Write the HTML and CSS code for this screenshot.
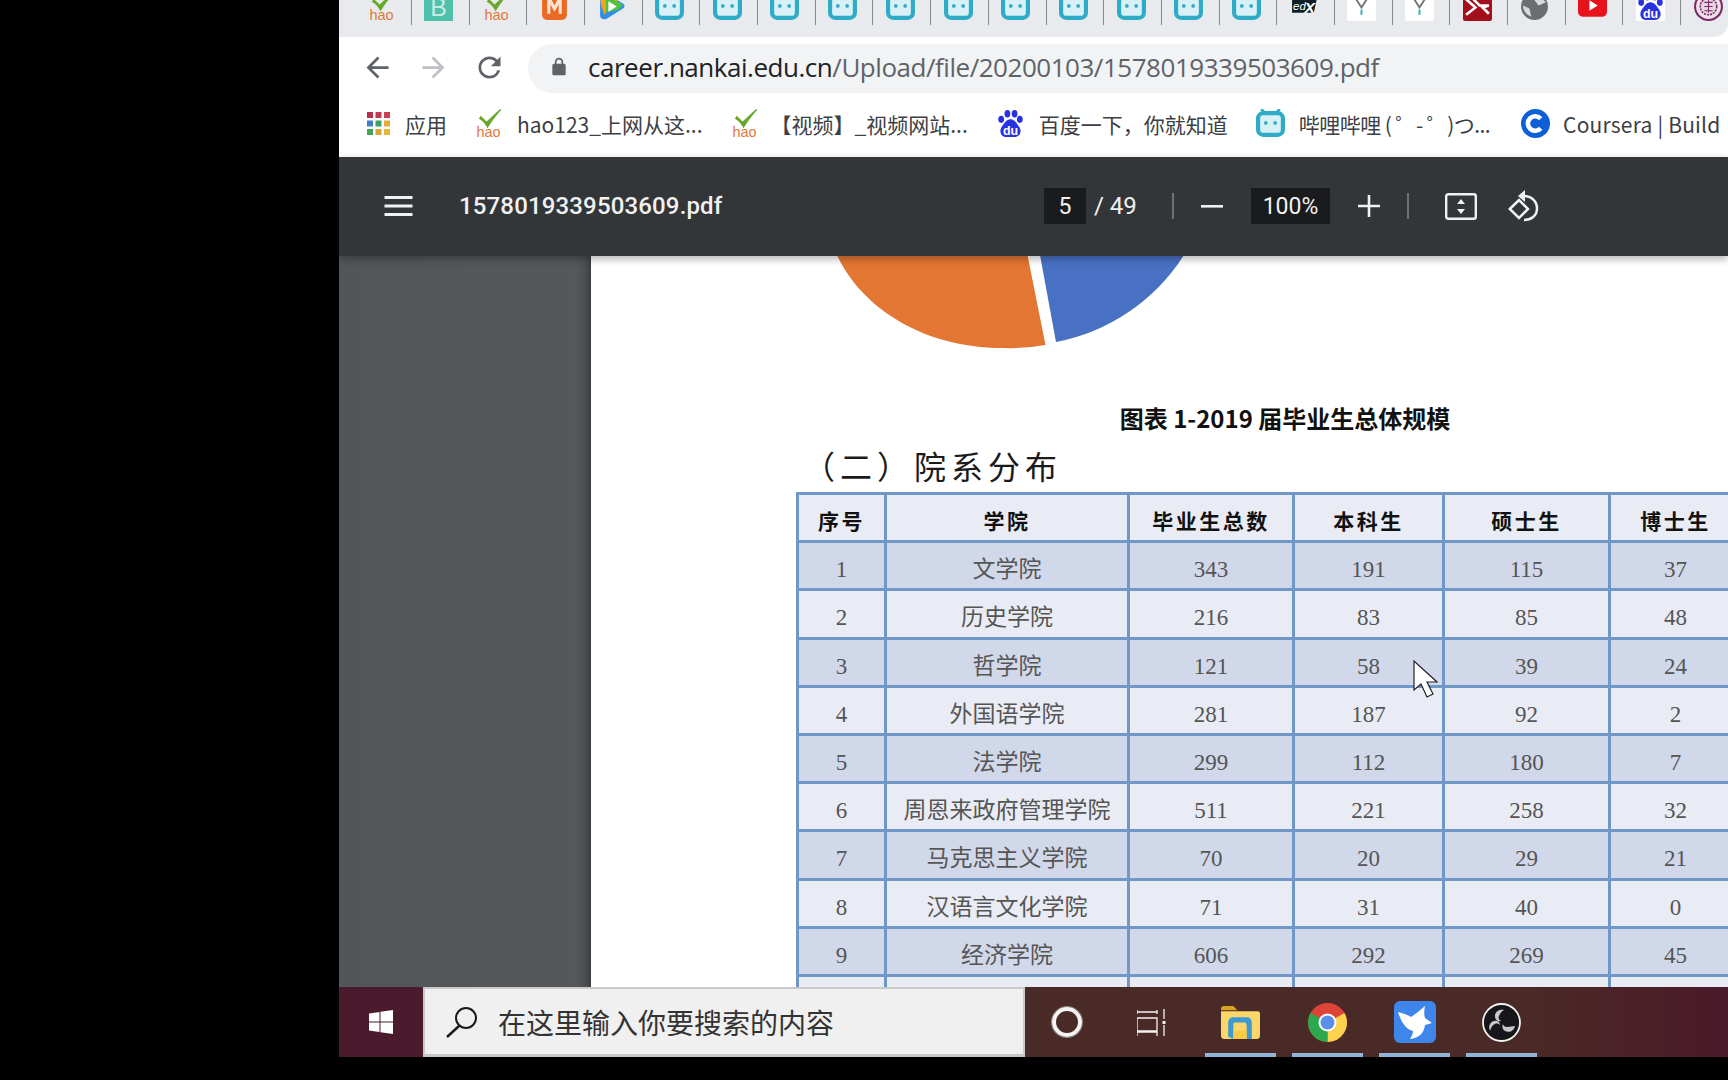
FILE: index.html
```html
<!DOCTYPE html>
<html lang="zh-CN">
<head>
<meta charset="utf-8">
<title>1578019339503609.pdf</title>
<link rel="stylesheet" href="styles.css">
</head>
<body>
<svg class="defs" aria-hidden="true">
  <symbol id="hao" viewBox="0 0 30 30">
    <path d="M7 7l6 6L27 0c1 0 1 1 1 1-5 6-10 12-14 19C12 16 9 12 5 10z" fill="#69a82a"/>
  </symbol>
  <symbol id="mgtv" viewBox="0 0 28 28">
    <path d="M2 0l7 0 5 4 5-4 7 0v22c0 3-2 5-5 5H7c-3 0-5-2-5-5z" fill="#ea6a23"/>
    <path d="M7 5h3v16H7zM10 5l4 8 4-8h3v16h-3V12l-4 7-4-7z" fill="#fbe3d2"/>
  </symbol>
  <symbol id="tv" viewBox="0 0 28 28">
    <path d="M3 4c0-3 3-4 5-3l17 10c2 1 2 4 0 5L9 26c-3 1-6 0-6-3z" fill="#2f8fe8"/>
    <path d="M3 4c0-3 3-4 5-3l12 7L7 22c-2-6-4-12-4-18z" fill="#f2a51c"/>
    <path d="M7 3l18 9-4 5L8 20c1-5 1-12-1-17z" fill="#52c23a"/>
    <path d="M11 9l8 5-8 5z" fill="#fff"/>
  </symbol>
  <symbol id="bili" viewBox="0 0 28 28">
    <rect x="2" y="4" width="24" height="21" rx="5" fill="#d9f0f6" stroke="#2eabc6" stroke-width="4"/>
    <circle cx="9.500" cy="13.500" r="1.800" fill="#2eabc6"/>
    <circle cx="18.500" cy="13.500" r="1.800" fill="#2eabc6"/>
    <path d="M8 3L5 0M20 3l3-3" stroke="#2eabc6" stroke-width="2.500"/>
  </symbol>
  <symbol id="lanyard" viewBox="0 0 28 28">
    <rect width="28" height="28" rx="2" fill="#fff"/>
    <path d="M7 4l7 11 7-11" fill="none" stroke="#707478" stroke-width="1.800"/>
    <path d="M14 17v5" stroke="#3eb3c0" stroke-width="2"/>
  </symbol>
  <symbol id="xr" viewBox="0 0 28 28">
    <rect width="28" height="28" rx="2" fill="#a30f1a"/>
    <path d="M3 7l9 8-9 7M25 6H13l-2 2 5 5h9l-6 2 6 6" fill="none" stroke="#fff" stroke-width="2.500"/>
  </symbol>
  <symbol id="globe" viewBox="0 0 28 28">
    <circle cx="14" cy="14" r="13" fill="#6b6d70"/>
    <path d="M14 8l6-3 5 5-7 3zM3 13l6 3 2 8c-5-2-8-6-8-11z" fill="#d9dadb"/>
  </symbol>
  <symbol id="yt" viewBox="0 0 28 28">
    <rect y="2" width="28" height="22" rx="5" fill="#e8121c"/>
    <path d="M11 8l8 5-8 5z" fill="#fff"/>
  </symbol>
  <symbol id="paw" viewBox="0 0 28 28">
    <rect width="28" height="28" rx="2" fill="#fff"/>
    <ellipse cx="5" cy="10" rx="2.800" ry="3.400" fill="#2932e1"/>
    <ellipse cx="11" cy="4.500" rx="2.800" ry="3.600" fill="#2932e1"/>
    <ellipse cx="18" cy="4.500" rx="2.800" ry="3.600" fill="#2932e1"/>
    <ellipse cx="23" cy="10" rx="2.800" ry="3.400" fill="#2932e1"/>
    <path d="M14 10c4 0 6 4 9 8 2 4 0 9-5 9H10c-5 0-7-5-5-9 3-4 5-8 9-8z" fill="#2932e1"/>
  </symbol>
  <symbol id="seal" viewBox="0 0 28 28">
    <circle cx="14" cy="14" r="13" fill="#efe3ea" stroke="#7c2a63" stroke-width="2"/>
    <circle cx="14" cy="14" r="8" fill="#e8d5e2" stroke="#7c2a63" stroke-width="1.500" stroke-dasharray="2 1"/>
    <path d="M10 10h8M10 14h8M10 18h8M14 8v12" stroke="#7c2a63"/>
  </symbol>
  <symbol id="coursera" viewBox="0 0 28 28">
    <circle cx="14" cy="14" r="14" fill="#0f5fd7"/>
    <path d="M19 9.500A7 7 0 1 0 19 18.500" fill="none" stroke="#fff" stroke-width="4.500"/>
  </symbol>
  <symbol id="apps" viewBox="0 0 23 23">
    <path d="M0 0h6v6H0z" fill="#b3344a"/><path d="M8.500 0h6v6h-6z" fill="#c4394e"/><path d="M17 0h6v6h-6z" fill="#c9405a"/>
    <path d="M0 8.500h6v6H0z" fill="#3d7fc4"/><path d="M8.500 8.500h6v6h-6z" fill="#3fa06a"/><path d="M17 8.500h6v6h-6z" fill="#e8a93a"/>
    <path d="M0 17h6v6H0z" fill="#47a35a"/><path d="M8.500 17h6v6h-6z" fill="#d9a53a"/><path d="M17 17h6v6h-6z" fill="#e2b53f"/>
  </symbol>
</svg>

<div class="screen">
  <div class="blackout"></div>
  <main class="main">
    <div class="tabs">
      <div class="tab"><svg class="fav" viewBox="0 0 30 30"><use href="#hao"/><text class="logo-hao" x="15" y="29">hao</text></svg></div>
      <div class="tab"><svg class="fav" viewBox="0 0 28 28"><rect width="28" height="28" fill="#4fc0ac"/><text class="logo-b" x="14" y="23">B</text></svg></div>
      <div class="tab"><svg class="fav" viewBox="0 0 30 30"><use href="#hao"/><text class="logo-hao" x="15" y="29">hao</text></svg></div>
      <div class="tab"><svg class="fav"><use href="#mgtv"/></svg></div>
      <div class="tab"><svg class="fav"><use href="#tv"/></svg></div>
      <div class="tab"><svg class="fav"><use href="#bili"/></svg></div>
      <div class="tab"><svg class="fav"><use href="#bili"/></svg></div>
      <div class="tab"><svg class="fav"><use href="#bili"/></svg></div>
      <div class="tab"><svg class="fav"><use href="#bili"/></svg></div>
      <div class="tab"><svg class="fav"><use href="#bili"/></svg></div>
      <div class="tab"><svg class="fav"><use href="#bili"/></svg></div>
      <div class="tab"><svg class="fav"><use href="#bili"/></svg></div>
      <div class="tab"><svg class="fav"><use href="#bili"/></svg></div>
      <div class="tab"><svg class="fav"><use href="#bili"/></svg></div>
      <div class="tab"><svg class="fav"><use href="#bili"/></svg></div>
      <div class="tab"><svg class="fav"><use href="#bili"/></svg></div>
      <div class="tab"><svg class="fav" viewBox="0 0 28 28"><path d="M2 6h24l-3 14H2z" fill="#0f1f26"/><text class="logo-ed" x="3" y="17">ed</text><text class="logo-x" x="14" y="20">X</text></svg></div>
      <div class="tab"><svg class="fav"><use href="#lanyard"/></svg></div>
      <div class="tab"><svg class="fav"><use href="#lanyard"/></svg></div>
      <div class="tab"><svg class="fav"><use href="#xr"/></svg></div>
      <div class="tab"><svg class="fav"><use href="#globe"/></svg></div>
      <div class="tab"><svg class="fav"><use href="#yt"/></svg></div>
      <div class="tab"><svg class="fav" viewBox="0 0 28 28"><use href="#paw"/><text class="logo-du" x="14" y="25">du</text></svg></div>
      <div class="tab tab-last"><svg class="fav"><use href="#seal"/></svg></div>
    </div>

    <div class="toolbar">
      <svg class="nav" viewBox="0 0 24 24"><path d="M20 11H7.830l5.590-5.590L12 4l-8 8 8 8 1.410-1.410L7.830 13H20v-2z"/></svg>
      <svg class="nav nav-off" viewBox="0 0 24 24"><path d="M12 4l-1.410 1.410L16.170 11H4v2h12.170l-5.580 5.590L12 20l8-8z"/></svg>
      <svg class="nav" viewBox="0 0 24 24"><path d="M17.650 6.350A7.958 7.958 0 0 0 12 4c-4.420 0-7.990 3.580-7.990 8s3.570 8 7.990 8c3.730 0 6.840-2.550 7.730-6h-2.080A5.990 5.990 0 0 1 12 18c-3.310 0-6-2.690-6-6s2.690-6 6-6c1.660 0 3.140.69 4.220 1.780L13 11h7V4l-2.350 2.350z"/></svg>
      <div class="omnibox">
        <svg class="lock" viewBox="0 0 24 24"><path d="M18 8h-1V6c0-2.760-2.240-5-5-5S7 3.240 7 6v2H6c-1.100 0-2 .9-2 2v10c0 1.100.9 2 2 2h12c1.100 0 2-.9 2-2V10c0-1.100-.9-2-2-2zM9 6c0-1.660 1.340-3 3-3s3 1.340 3 3v2H9V6z"/></svg>
        <span class="url"><span class="host">career.nankai.edu.cn</span>/Upload/file/20200103/1578019339503609.pdf</span>
      </div>
    </div>

    <div class="bookmarks">
      <div class="bm bm-apps"><svg class="bm-grid"><use href="#apps"/></svg><span>应用</span></div>
      <div class="bm bm-hao"><svg class="bm-ico" viewBox="0 0 30 30"><use href="#hao"/><text class="logo-hao" x="15" y="29">hao</text></svg><span>hao123_上网从这...</span></div>
      <div class="bm bm-video"><svg class="bm-ico" viewBox="0 0 30 30"><use href="#hao"/><text class="logo-hao" x="15" y="29">hao</text></svg><span>【视频】_视频网站...</span></div>
      <div class="bm bm-du"><svg class="bm-ico" viewBox="0 0 28 28"><use href="#paw"/><text class="logo-du" x="14" y="25">du</text></svg><span>百度一下，你就知道</span></div>
      <div class="bm bm-bili"><svg class="bm-ico"><use href="#bili"/></svg><span>哔哩哔哩 ( ゜- ゜)つ...</span></div>
      <div class="bm bm-coursera"><svg class="bm-ico"><use href="#coursera"/></svg><span>Coursera | Build</span></div>
    </div>

    <div class="pdfbar">
      <svg class="menu" viewBox="0 0 28 20"><path d="M0 0h28v3H0zM0 8.500h28v3H0zM0 17h28v3H0z"/></svg>
      <div class="filename">1578019339503609.pdf</div>
      <div class="pdfbox pdfbox-page">5</div>
      <div class="pagecount">/ 49</div>
      <div class="pdfsep"></div>
      <svg class="pdfbtn pdfbtn-minus" viewBox="0 0 22 22"><path d="M0 10h22v2.600H0z"/></svg>
      <div class="pdfbox pdfbox-zoom">100%</div>
      <svg class="pdfbtn pdfbtn-plus" viewBox="0 0 22 22"><path d="M9.700 0h2.600v9.700H22v2.600h-9.700V22H9.700v-9.700H0V9.700h9.700z"/></svg>
      <div class="pdfsep pdfsep-2"></div>
      <svg class="fit" viewBox="0 0 32 27"><rect x="1.200" y="1.200" width="29.600" height="24.600" rx="2" fill="none" stroke="#f1f1f1" stroke-width="2.400"/><path d="M16 6l4 5h-8zM16 21l-4-5h8z" fill="#f1f1f1"/></svg>
      <svg class="rotate" viewBox="0 0 32 32"><path d="M1.800 19L11 10l9 9-9 9z" fill="none" stroke="#f1f1f1" stroke-width="2.500"/><path d="M16 6c7 0 13 5 13 12.500S23 30 16 30" fill="none" stroke="#f1f1f1" stroke-width="2.500"/><path d="M17 0v12l-7-6z" fill="#f1f1f1"/></svg>
    </div>

    <div class="viewer">
      <div class="side"></div>
      <div class="page">
        <svg class="pie" viewBox="591 255 1137 100">
          <path d="M700 255H1027.500L1045.500 345A195 195 0 0 1 1003 348C920 348 860 305 837 255z" fill="#e27632"/>
          <path d="M1040 255H1184A195 195 0 0 1 1056 342z" fill="#4871c4"/>
        </svg>
        <div class="caption">图表 1-2019 届毕业生总体规模</div>
        <h2 class="section">（二）院系分布</h2>
        <table class="stats">
          <colgroup><col class="c1"><col class="c2"><col class="c3"><col class="c4"><col class="c5"><col class="c6"></colgroup>
          <thead><tr><th>序号</th><th>学院</th><th>毕业生总数</th><th>本科生</th><th>硕士生</th><th>博士生</th></tr></thead>
          <tbody>
            <tr><td>1</td><td>文学院</td><td>343</td><td>191</td><td>115</td><td>37</td></tr>
            <tr><td>2</td><td>历史学院</td><td>216</td><td>83</td><td>85</td><td>48</td></tr>
            <tr><td>3</td><td>哲学院</td><td>121</td><td>58</td><td>39</td><td>24</td></tr>
            <tr><td>4</td><td>外国语学院</td><td>281</td><td>187</td><td>92</td><td>2</td></tr>
            <tr><td>5</td><td>法学院</td><td>299</td><td>112</td><td>180</td><td>7</td></tr>
            <tr><td>6</td><td>周恩来政府管理学院</td><td>511</td><td>221</td><td>258</td><td>32</td></tr>
            <tr><td>7</td><td>马克思主义学院</td><td>70</td><td>20</td><td>29</td><td>21</td></tr>
            <tr><td>8</td><td>汉语言文化学院</td><td>71</td><td>31</td><td>40</td><td>0</td></tr>
            <tr><td>9</td><td>经济学院</td><td>606</td><td>292</td><td>269</td><td>45</td></tr>
            <tr><td></td><td></td><td></td><td></td><td></td><td></td></tr>
          </tbody>
        </table>
        <svg class="cursor" viewBox="0 0 25 38"><path d="M1 1v29l7-6 6 13 6-3-6-12h10z" fill="#fff" stroke="#222" stroke-width="1.200"/></svg>
      </div>
    </div>

    <div class="taskbar">
      <div class="start"><svg class="winlogo" viewBox="0 0 24 24"><path d="M0 3.400L10.500 2v9.500H0zM11.500 1.800L24 0v11.500H11.500zM0 12.500h10.500V22L0 20.600zM11.500 12.500H24V24l-12.500-1.800z" fill="#fff"/></svg></div>
      <div class="search">
        <svg class="mag" viewBox="0 0 32 32"><circle cx="20" cy="12" r="10" fill="none" stroke="#1a1a1a" stroke-width="2"/><path d="M13 20L1 31" stroke="#1a1a1a" stroke-width="2.400"/></svg>
        <span class="search-text">在这里输入你要搜索的内容</span>
      </div>
      <div class="ring"></div>
      <svg class="taskview" viewBox="0 0 29 27"><path d="M0 5V1M20 1v4M0 3h20M0 9h20v13H0zM0 27v-4h20v4M27 0v10M27 16v11" fill="none" stroke="#f4f4f4" stroke-width="1.300"/><path d="M25.500 12h3v3h-3z" fill="#f4f4f4"/></svg>
      <div class="apps">
        <div class="app">
          <svg class="app-ico" viewBox="0 0 38 32"><path d="M0 3c0-2 1-3 3-3h9l4 4H0z" fill="#d9a520"/><path d="M0 5h36c1 0 2 1 2 2v22c0 2-1 3-3 3H3c-2 0-3-1-3-3z" fill="#fbd669"/><path d="M7 30V16c0-3 2-5 5-5h13c3 0 5 2 5 5v16h-5V19c0-2-1-3-2-3h-9c-2 0-2 1-2 3v13z" fill="#3d9ad1"/><path d="M12 24h13v8H12z" fill="#f7c948"/></svg>
        </div>
        <div class="app">
          <svg class="app-ico" viewBox="0 0 39 39"><circle cx="19.500" cy="19.500" r="19.500" fill="#db4437"/><path d="M19.500 19.500L36.500 10A19.500 19.500 0 0 1 19.500 39z" fill="#fbd34d"/><path d="M19.500 19.500L19.500 39A19.500 19.500 0 0 1 2.500 10z" fill="#2ea84f"/><circle cx="19.500" cy="19.500" r="9" fill="#fff"/><circle cx="19.500" cy="19.500" r="7" fill="#5a8fe8"/></svg>
        </div>
        <div class="app">
          <svg class="app-ico app-bird" viewBox="0 0 42 42"><rect width="42" height="42" rx="6" fill="#3f86ec"/><path d="M4 11c5 1 10 3 13 5 5-3 9-7 14-11-1 5-1 9 0 12l7 5-7 2c-1 8-6 13-15 14 2-3 3-6 3-8C11 28 7 20 4 11z" fill="#fff"/></svg>
        </div>
        <div class="app">
          <svg class="app-ico" viewBox="0 0 39 39"><circle cx="19.500" cy="19.500" r="18.500" fill="#17171b" stroke="#f2f2f2" stroke-width="1.800"/><path d="M22 7c-5-1-9 2-9 6 0 4 3 6 6 5-2-1-3-3-2-5 1-3 3-5 5-6zM8 28c-2-5 0-9 4-10 3-1 6 1 6 4-1-1-3-2-5-1-3 1-4 4-5 7zM33 23c-1 5-6 7-10 5-3-2-3-5-2-7 0 2 2 3 4 3 3 0 6-1 8-1z" fill="#c9c9cc"/></svg>
        </div>
      </div>
    </div>
  </main>
</div>
</body>
</html>
```

FILE: styles.css
```css
* { box-sizing: border-box; }
html, body { margin: 0; padding: 0; background: #000; }
body { width: 1728px; height: 1080px; overflow: hidden; font-family: "Noto Sans CJK SC", sans-serif; }
.defs { position: absolute; width: 0; height: 0; }

.screen { display: flex; width: 1728px; height: 1057px; }
.blackout { width: 339px; flex: none; background: #000; }
.main { width: 1389px; height: 1057px; display: flex; flex-direction: column; overflow: hidden; background: #fff; }

/* Logo lettering inside favicons */
.logo-hao { font-family: "Liberation Sans", sans-serif; font-size: 15px; text-anchor: middle; fill: #e0793a; }
.logo-b { font-family: "Liberation Sans", sans-serif; font-size: 24px; text-anchor: middle; fill: #c8ece4; }
.logo-ed { font-family: "Liberation Sans", sans-serif; font-style: italic; font-size: 11px; fill: #fff; }
.logo-x { font-family: "Liberation Sans", sans-serif; font-style: italic; font-weight: 700; font-size: 15px; fill: #fff; }
.logo-du { font-family: "Liberation Sans", sans-serif; font-weight: 700; font-size: 12px; text-anchor: middle; fill: #fff; }

/* Tab strip */
.tabs { height: 37px; flex: none; display: flex; align-items: flex-start; padding-left: 15.3px; background: #e8eaed; border-bottom-right-radius: 14px; overflow: hidden; }
.tab { width: 57.7px; height: 24.5px; flex: none; display: flex; justify-content: center; padding-right: 3px; border-right: 1.5px solid #85888c; }
.tab-last { border-right: 0; }
.fav { width: 29px; height: 29px; margin-top: -8px; flex: none; }

/* Address row */
.toolbar { height: 56px; flex: none; display: flex; align-items: flex-start; padding: 7px 0 0 22px; background: #fff; }
.nav { width: 33px; height: 33px; margin: 7px 23px 0 0; fill: #5f6368; flex: none; }
.nav-off { fill: #bdc1c6; }
.nav:nth-child(3) { margin-right: 22px; }
.omnibox { flex: 1; height: 49px; margin-right: -40px; display: flex; align-items: center; gap: 19px; padding: 0 0 3px 21px; background: #f1f3f4; border-radius: 25px; }
.lock { width: 20px; height: 20px; fill: #5f6368; flex: none; }
.url { font-family: "Open Sans", sans-serif; font-size: 26px; color: #5f6368; white-space: nowrap; letter-spacing: -0.47px; }
.host { color: #202124; }

/* Bookmarks */
.bookmarks { height: 64px; flex: none; display: flex; align-items: center; padding: 0 0 3px 28px; background: #fff; white-space: nowrap; overflow: hidden; }
.bm { display: flex; align-items: center; gap: 13px; font-size: 21px; color: #3c4043; flex: none; }
.bm-apps { gap: 15px; }
.bm-hao { margin-left: 27px; gap: 14px; }
.bm-video { margin-left: 27px; gap: 12px; }
.bm-du { margin-left: 28px; gap: 14px; }
.bm-bili { margin-left: 28px; gap: 14px; }
.bm-bili span { letter-spacing: -0.55px; }
.bm-coursera { margin-left: 31px; gap: 13px; }
.bm-coursera span { letter-spacing: 0.2px; }
.bm-grid { width: 23px; height: 23px; flex: none; }
.bm-ico { width: 29px; height: 29px; flex: none; }

/* PDF toolbar */
.pdfbar { height: 99px; flex: none; position: relative; z-index: 2; display: flex; align-items: center; padding: 0 0 1px 45px; background: #323639; box-shadow: 0 3px 8px rgba(0, 0, 0, .3); color: #f1f1f1; font-family: Roboto, sans-serif; }
.menu { width: 29px; height: 20px; fill: #f1f1f1; flex: none; }
.filename { width: 585px; margin-left: 46px; font-size: 24px; font-weight: 500; letter-spacing: 0.15px; flex: none; }
.pdfbox { height: 36px; display: flex; align-items: center; justify-content: center; background: #191b1c; flex: none; }
.pdfbox-page { width: 42px; font-size: 23px; }
.pdfbox-zoom { width: 79px; margin-left: 28px; font-size: 23px; }
.pagecount { margin-left: 8px; width: 78px; font-size: 24px; flex: none; }
.pdfsep { width: 2px; height: 26px; background: #6f7275; flex: none; }
.pdfsep-2 { margin-left: 27px; }
.pdfbtn { width: 22px; height: 22px; fill: #f1f1f1; flex: none; }
.pdfbtn-minus { margin-left: 27px; }
.pdfbtn-plus { margin-left: 28px; }
.fit { width: 32px; height: 27px; margin-left: 36px; flex: none; }
.rotate { width: 32px; height: 32px; margin-left: 31px; flex: none; }

/* Viewer */
.viewer { flex: 1; min-height: 0; display: flex; overflow: hidden; background: #525659; }
.side { width: 252px; flex: none; background: linear-gradient(to right, #535659 0, #55575a 94%, #47494b 100%); }
.page { position: relative; flex: 1; min-width: 0; padding-left: 205px; background: #fff; overflow: hidden; box-shadow: 0 0 6px rgba(0, 0, 0, .4); }
.pie { display: block; width: 1137px; height: 100px; margin: -1px 0 0 -205px; }
.caption { width: 660px; margin: 48px 0 0 159px; text-align: center; font-size: 24px; line-height: 30px; font-weight: 700; color: #111; white-space: nowrap; font-family: "Noto Sans CJK SC", sans-serif; }
.section { margin: 15px 0 4px 7px; font-size: 32px; line-height: 40px; font-weight: 400; letter-spacing: 5px; color: #1b1b1b; font-family: "Liberation Serif", "Noto Sans CJK SC", serif; }

.stats { border-collapse: collapse; table-layout: fixed; width: 944px; font-family: "Liberation Serif", "Noto Sans CJK SC", serif; }
.c1 { width: 88px; }
.c2 { width: 243px; }
.c3 { width: 165px; }
.c4 { width: 150px; }
.c5 { width: 166px; }
.c6 { width: 132px; }
.stats tr { height: 48.2px; }
.stats th, .stats td { border: 3px solid #6f97c8; padding: 9px 0 0; text-align: center; white-space: nowrap; overflow: hidden; line-height: 28px; }
.stats th { font-size: 21px; font-weight: 700; letter-spacing: 2.500px; color: #111; background: #e9ecf4; }
.stats td { font-size: 23px; color: #555; }
.stats tbody tr:nth-child(odd) td { background: #d1d8e9; }
.stats tbody tr:nth-child(even) td { background: #e9ecf4; }
.cursor { position: absolute; left: 822px; top: 404px; width: 25px; height: 38px; }

/* Taskbar */
.taskbar { height: 70px; flex: none; position: relative; z-index: 3; display: flex; align-items: center; background: linear-gradient(to right, #4a2b27 0, #4a2a26 85%, #4a1a2a 100%); }
.start { width: 84px; height: 70px; flex: none; display: flex; align-items: center; justify-content: center; background: #4a1b2c; }
.winlogo { width: 24px; height: 24px; }
.search { width: 602px; height: 70px; flex: none; display: flex; align-items: center; gap: 20px; padding-left: 21px; background: #f0f0f0; border: 2px solid #c9c9c9; border-bottom-width: 3px; }
.mag { width: 32px; height: 32px; flex: none; }
.search-text { font-size: 28px; color: #333; white-space: nowrap; }
.ring { width: 30px; height: 30px; margin-left: 27px; flex: none; border-radius: 50%; border: 4px solid #f4f4f4; box-shadow: 0 0 0 1px #8d8683; }
.taskview { width: 29px; height: 27px; margin-left: 55px; flex: none; }
.apps { display: flex; height: 70px; margin-left: 39px; }
.app { width: 71px; height: 70px; margin-right: 16px; flex: none; display: flex; align-items: center; justify-content: center; border-bottom: 4px solid #92b4d6; }
.app-ico { width: 39px; height: 39px; margin-top: 4px; }
.app-bird { width: 42px; height: 42px; }
```
